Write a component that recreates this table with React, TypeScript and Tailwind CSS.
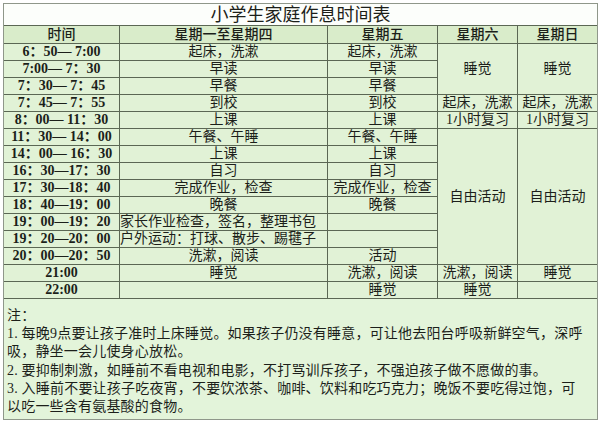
import React from 'react';

type Cell = {
  text?: string;
  span?: 'row-span-3' | 'row-span-8';
  left?: boolean;
  time?: boolean;
};

// one entry per grid slot, auto-placed row by row (spanned slots skipped)
const rows: Cell[][] = [
  [{ text: '6：50— 7:00', time: true }, { text: '起床，洗漱' }, { text: '起床，洗漱' }, { text: '睡觉', span: 'row-span-3' }, { text: '睡觉', span: 'row-span-3' }],
  [{ text: '7:00— 7：30', time: true }, { text: '早读' }, { text: '早读' }],
  [{ text: '7：30— 7：45', time: true }, { text: '早餐' }, { text: '早餐' }],
  [{ text: '7：45— 7：55', time: true }, { text: '到校' }, { text: '到校' }, { text: '起床，洗漱' }, { text: '起床，洗漱' }],
  [{ text: '8：00— 11：30', time: true }, { text: '上课' }, { text: '上课' }, { text: '1小时复习' }, { text: '1小时复习' }],
  [{ text: '11：30— 14：00', time: true }, { text: '午餐、午睡' }, { text: '午餐、午睡' }, { text: '自由活动', span: 'row-span-8' }, { text: '自由活动', span: 'row-span-8' }],
  [{ text: '14：00— 16：30', time: true }, { text: '上课' }, { text: '上课' }],
  [{ text: '16：30—17：30', time: true }, { text: '自习' }, { text: '自习' }],
  [{ text: '17：30—18：40', time: true }, { text: '完成作业，检查' }, { text: '完成作业，检查' }],
  [{ text: '18：40—19：00', time: true }, { text: '晚餐' }, { text: '晚餐' }],
  [{ text: '19：00—19：20', time: true }, { text: '家长作业检查，签名，整理书包', left: true }, {}],
  [{ text: '19：20—20：00', time: true }, { text: '户外运动：打球、散步、踢毽子', left: true }, {}],
  [{ text: '20：00—20：50', time: true }, { text: '洗漱，阅读' }, { text: '活动' }],
  [{ text: '21:00', time: true }, { text: '睡觉' }, { text: '洗漱，阅读' }, { text: '洗漱，阅读' }, { text: '睡觉' }],
  [{ text: '22:00', time: true }, {}, { text: '睡觉' }, { text: '睡觉' }, {}],
];

const headers = ['时间', '星期一至星期四', '星期五', '星期六', '星期日'];

const notes = [
  '注：',
  '1. 每晚9点要让孩子准时上床睡觉。如果孩子仍没有睡意，可让他去阳台呼吸新鲜空气，深呼',
  '吸，静坐一会儿使身心放松。',
  '2. 要抑制刺激，如睡前不看电视和电影，不打骂训斥孩子，不强迫孩子做不愿做的事。',
  '3. 入睡前不要让孩子吃夜宵，不要饮浓茶、咖啡、饮料和吃巧克力；晚饭不要吃得过饱，可',
  '以吃一些含有氨基酸的食物。',
];

const App: React.FC = () => {
  return (
    <div className="w-[600px] h-[426px] bg-white pt-[3px] pl-[3px] text-[#1c1f1a] font-['Liberation_Serif','Noto_Sans_CJK_SC',serif]">
      <div className="w-[595px] border border-[#8f978a]">
        {/* title */}
        <div className="h-[22px] bg-[#fcfefb] border-b border-[#5b6754] flex items-center justify-center text-[18px] leading-none">
          小学生家庭作息时间表
        </div>

        {/* schedule grid, gap-px draws the lines */}
        <div className="grid grid-cols-[115px_207px_109px_79px_79px] grid-rows-[17px] auto-rows-[16px] gap-px bg-[#5b6754]">
          {headers.map((h) => (
            <div key={h} className="bg-[#d9ecca] flex items-center justify-center text-[14px] leading-none font-medium">
              {h}
            </div>
          ))}
          {rows.flat().map((c, i) => (
            <div
              key={i}
              className={`bg-[#e1f2d6] flex items-center text-[14px] leading-none whitespace-nowrap ${c.span ?? ''} ${
                c.left ? 'justify-start' : 'justify-center'
              } ${c.time ? 'font-bold' : ''}`}
            >
              {c.text}
            </div>
          ))}
        </div>

        {/* notes */}
        <div className="h-[121px] border-t border-[#5b6754] bg-[#e3f4da] pt-[8px] pl-[3px] text-[14px] leading-[18.2px] tracking-[0.2px]">
          {notes.map((n) => (
            <div key={n} className="whitespace-nowrap">
              {n}
            </div>
          ))}
        </div>
      </div>
    </div>
  );
};

export default App;
